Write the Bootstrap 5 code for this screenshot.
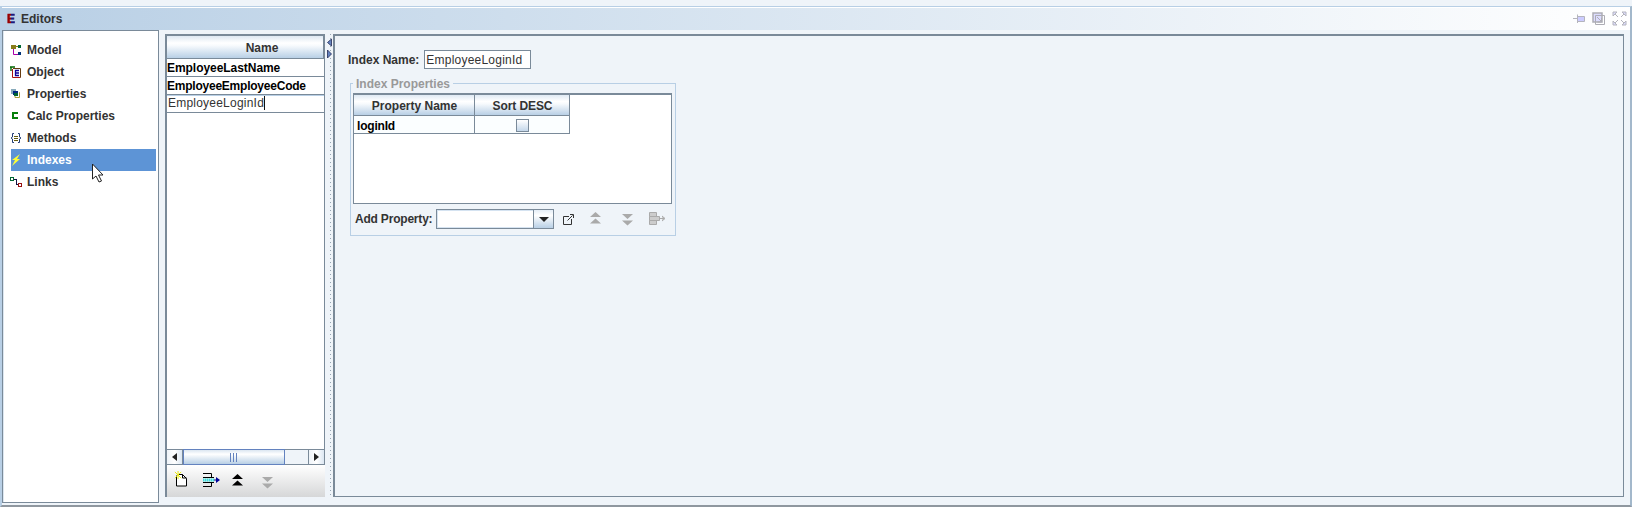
<!DOCTYPE html>
<html lang="en">
<head>
<meta charset="utf-8">
<title>Editors</title>
<link rel="stylesheet" href="https://cdn.jsdelivr.net/npm/bootstrap@5.3.0/dist/css/bootstrap.min.css">
<style>
:root{--edge:#7a8a99;--soft:#b8cfe5;--face:#eff4f9}
body{font:bold 12px/14px "Liberation Sans",Arial,sans-serif;color:#333;background:var(--face);height:507px;overflow:hidden;padding-top:6px}
svg{display:block;flex:none}
.window{height:501px;border:1px solid var(--soft);border-left:2px solid var(--soft);border-right:2px solid #a3b8cb;border-bottom:2px solid #8f979f;box-shadow:inset 0 1px #fff}
.titlebar{height:22px;flex:none;background:linear-gradient(90deg,#b8cfe5,#fff);margin-top:1px;padding:0 3px 1px 5px}
.logo-e{font-size:12px;width:14px;background:linear-gradient(90deg,#900 4px,#191980 4px);-webkit-background-clip:text;color:transparent;-webkit-text-stroke:.6px transparent}
.side{width:157px;height:473px;background:#fff;border:1px solid var(--edge);padding:8px 2px 0 8px;box-shadow:inset 1px 0 #dce7f1;flex:none}
.side .list-group-item{height:22px;padding:0;border:0;background:none;color:#333;display:flex;align-items:center;gap:4px}
.side .list-group-item.active{background:#5d94d6;color:#fff;margin:0}
.side svg{margin-left:-1px;margin-right:1px}
.names{width:160px;height:463px;margin:4px 0 0 6px;border:solid var(--edge);border-width:2px 0 0 2px;flex:none}
.names-body{width:158px;height:413px;background:#fff;border-right:1px solid var(--edge)}
.head{background:linear-gradient(#dfe9f3 0,#fff 32%,#f7fafd 44%,#b8cfe5);border:solid var(--edge);border-width:0 1px 1px 0;display:flex;align-items:center;justify-content:center}
.name-row{height:18px;border-bottom:1px solid var(--edge);color:#000;padding:2px 0 0 0;letter-spacing:-.23px;line-height:15px;white-space:nowrap}
.edit-cell{font-weight:400;color:#333;letter-spacing:.22px;border-top:1px solid var(--soft);padding:0 0 0 1px}
.caret{display:inline-block;width:1px;height:14px;background:#111;vertical-align:-3px}
.scroller{width:158px;height:16px;border:1px solid var(--edge);border-left:0;display:flex;background:var(--face)}
.sbtn{width:16px;background:linear-gradient(90deg,#eef3f8,#fff,#dce7f2);display:flex;align-items:center;justify-content:center}
.thumb{width:102px;margin:-1px 0;border:1px solid #6382bf;background:linear-gradient(#dbe6f1,#fff 30%,#b8cfe5);display:flex;align-items:center;justify-content:center;gap:1px}
.thumb i{width:1px;height:9px;background:#6382bf;margin-right:1px}
.tools{height:32px;background:linear-gradient(#fff,#d6d7d8);position:relative}
.tools svg{position:absolute}
.divider{width:8px;height:463px;margin-top:4px;background:repeating-linear-gradient(#96a5b4 0 1px,transparent 1px 4px) 5px 0/1px 100% no-repeat;flex:none}
.detail{width:1291px;height:463px;margin:4px 0 0;border:solid var(--edge);border-width:2px 1px 1px 2px;padding:14px 0 0 13px;flex:none}
.field{width:107px;height:19px;border:1px solid var(--edge);background:#fff;font-weight:400;letter-spacing:.22px;padding:2px 1px;margin-left:5px}
.group{width:326px;height:153px;border:1px solid var(--soft);margin:14px 0 0 2px;padding:9px 2px 0}
.group .caption{position:absolute;left:0;top:-16px;background:var(--face);color:#999;padding:0 3px;white-space:nowrap}
.grid-box{width:319px;height:111px;background:#fff;border:1px solid var(--edge);border-top-width:2px}
.cell{height:18px;border:solid var(--edge);border-width:0 1px 1px 0;color:#000;background:#fbfeff;display:flex;align-items:center}
.check{width:13px;height:13px;border:1px solid var(--edge);background:linear-gradient(#fff,#c4d7ea)}
.adder{padding-top:5px}
.adder .lab{letter-spacing:-.2px;margin-left:2px}
.combo{width:118px;height:20px;border:1px solid var(--edge);background:#fff;margin-left:4px;display:flex;box-shadow:inset 0 0 0 1px #d5e3f1}
.drop{width:20px;margin-left:auto;border-left:1px solid var(--edge);background:linear-gradient(#e4edf6,#fff 30%,#b8cfe5);display:flex;align-items:center;justify-content:center}
.pointer{position:absolute;left:91px;top:162px;z-index:5}
</style>
<script src="https://cdn.jsdelivr.net/npm/bootstrap@5.3.0/dist/js/bootstrap.bundle.min.js"></script>
</head>
<body>
<main class="window">
<header class="titlebar d-flex align-items-center">
<span class="logo-e">E</span><span>Editors</span>
<div class="d-flex ms-auto align-items-center" style="gap:7px">
<svg width="12" height="11" fill="#ccf" stroke="#b4b4bd"><path d="M0 5.500h4M4.500 3.500h7v5h-7zM4.500 1.500v8.500"/></svg>
<svg width="13" height="13" fill="#dcdcff" stroke="#adadb5"><path stroke-width="1.500" d="M1 1h9v9H1z"/><path d="M3.500 3.500h9v9h-9zM5 5l4.500 4.500M9.500 6v4h-4" fill="none"/></svg>
<svg width="15" height="15" fill="#ddf" stroke="#b4b4bd"><path d="M1 5V1h4zM10 1h4v4zM1 10v4h4zM14 10v4h-4zM3 3l3 3M12 3L9 6M3 12l3-3M12 12L9 9"/></svg>
</div>
</header>
<div class="d-flex">
<nav class="side list-group rounded-0">
<a class="list-group-item"><svg width="12" height="12"><path fill="none" stroke="#a0a" d="M3.500 5v5.500H8"/><path fill="#887d19" d="M1 1h5v1h2v1H6v2H1z"/><path fill="#063" d="M8 1h3v3H8z"/><path fill="#037" d="M8 8h3v3H8z"/></svg>Model</a>
<a class="list-group-item"><svg width="12" height="12" fill="none"><path stroke="#a11" d="M2.500 3v8.500h8"/><path stroke="#663c10" d="M3 2.500h7.500v9"/><path stroke="#060" stroke-width="1.400" d="M0 1h5M1 1v4"/><path stroke="#109" stroke-width="1.300" d="M9 4.500H5.500v5H9M5 7h4"/></svg>Object</a>
<a class="list-group-item"><svg width="12" height="12"><path fill="#8ab" d="M1 1h5v5H1z"/><path fill="#002a80" d="M3 3h5v4H3z"/><path fill="#063" d="M4 5h4v3H4z"/><path fill="none" stroke="#aaa13a" d="M9 4.500h.5v5H5V8"/></svg>Properties</a>
<a class="list-group-item"><svg width="12" height="12"><path fill="none" stroke="#07800b" stroke-width="2" d="M8 3H3v5h5"/></svg>Calc Properties</a>
<a class="list-group-item"><svg width="12" height="12" fill="none"><path stroke="#223d76" d="M4 1.500H2.500V5L1 6l1.500 1v3.500H4M8 1.500h1.500V5L11 6 9.500 7v3.500H8"/><path stroke="#665d10" d="M4 4.500h4M4 6.500h4M4 8.500h4"/></svg>Methods</a>
<a class="list-group-item active rounded-0"><svg width="12" height="12"><path fill="#ff3" d="M10 0L2 6h3L2 12l8-7H7l3-5z"/></svg>Indexes</a>
<a class="list-group-item"><svg width="12" height="12" fill="none" shape-rendering="crispEdges"><path stroke="#063" d="M.5 1.500h3v3h-3z"/><path stroke="#114" d="M4 3.500h2.500v5H8"/><path stroke="#911" d="M8.500 7.500h3v3h-3z"/></svg>Links</a>
</nav>
<section class="names">
<div class="names-body">
<div class="head" style="height:23px"><span style="padding:2px 0 0 34px">Name</span></div>
<div class="name-row" style="letter-spacing:-.05px">EmployeeLastName</div>
<div class="name-row">EmployeeEmployeeCode</div>
<div class="name-row edit-cell">EmployeeLoginId<span class="caret"></span></div>
</div>
<div class="scroller">
<div class="sbtn" style="border-right:1px solid var(--edge)"><svg width="5" height="8"><path fill="#222" d="M5 0v8L0 4z"/></svg></div>
<div class="thumb ms-0"><i></i><i></i><i></i></div><div class="flex-grow-1"></div>
<div class="sbtn" style="border-left:1px solid var(--edge)"><svg width="5" height="8"><path fill="#222" d="M0 0v8l5-4z"/></svg></div>
</div>
<div class="tools">
<svg style="left:7px;top:6px" width="14" height="16"><path fill="#fff" stroke="#000" d="M2.500 4.500V15h10V7.500l-4-4H5M8.500 3.500V7h4"/><path stroke="#e8e800" d="M1 1l7 7M8 1L1 8M4.500 0v9" transform="scale(.9)"/></svg>
<svg style="left:36px;top:8px" width="18" height="14" fill="none"><path stroke="#000" d="M0 .5h8.500v4H0M0 13.500h8.500v-4H0M0 4.500h11M0 9.500h11"/><path stroke="#3de0e0" stroke-width="3" stroke-dasharray="1.500 .5" d="M0 7h11"/><path fill="#009" d="M11 6.500h2V4l4 3-4 3V7.500h-2z"/></svg>
<svg style="left:65px;top:9px" width="11" height="12"><path d="M5.500 0L11 5H0zM5.500 6.500L11 11.500H0z"/></svg>
<svg style="left:95px;top:12px" width="11" height="12"><path fill="#aaa" d="M0 0h11L5.500 5zM0 6.500h11L5.500 11.500z"/></svg>
</div>
</section>
<div class="divider position-relative">
<svg class="position-absolute" style="left:2px;top:4px" width="5" height="20"><path fill="#6382bf" stroke="#222a55" stroke-width=".8" d="M4.500 1v7L.5 4.500zM.5 12v8l4-4z"/></svg>
</div>
<section class="detail">
<div class="d-flex align-items-center"><span>Index Name:</span><div class="field">EmployeeLoginId</div></div>
<div class="group">
<div class="position-relative"><span class="caption">Index Properties</span></div>
<div class="grid-box">
<div class="d-flex"><div class="head" style="width:121px;height:21px;padding:1px 0 0 1px">Property Name</div><div class="head" style="width:95px;height:21px;padding:1px 0 0 1px;letter-spacing:-.1px">Sort DESC</div></div>
<div class="d-flex"><div class="cell" style="width:121px;padding:2px 0 0 3px;letter-spacing:-.2px">loginId</div><div class="cell justify-content-center" style="width:95px;padding-top:1px"><div class="check"></div></div></div>
</div>
<div class="adder d-flex align-items-center"><span class="text-nowrap lab">Add Property:</span><div class="combo"><div class="drop"><svg width="10" height="5"><path fill="#222" d="M0 0h10L5 5z"/></svg></div></div>
<svg class="ms-2" width="13" height="13" fill="none" stroke="#333"><path d="M7 3.500H1.500v8h8V6M5.500 7.500l5-5M8 1.500h3.500V5"/></svg>
<svg style="margin:-2px 0 0 15px" width="11" height="12"><path fill="#aaa" d="M5.500 0L11 5H0zM5.500 6.500L11 11.500H0z"/></svg>
<svg style="margin:2px 0 0 21px" width="11" height="12"><path fill="#aaa" d="M0 0h11L5.500 5zM0 6.500h11L5.500 11.500z"/></svg>
<svg style="margin:-1px 0 0 16px" width="17" height="14" fill="#ccc" stroke="#aaa"><path d="M.5.5h7v4h-7zM.5 8.500h7v4h-7zM.5 4.500h10v4H.5zM11 6.500h4M13 4l3 2.500L13 9"/></svg></div>
</div>
</section>
</div>
</main>
<svg class="pointer" width="14" height="22"><path fill="#fff" stroke="#222" d="M1.500 2v15l3.500-3 3 6 2.500-1-3-6H12z"/></svg>
</body>
</html>
